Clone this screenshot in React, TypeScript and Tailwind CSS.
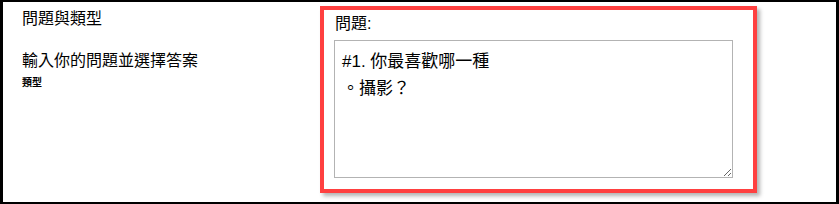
export default function App() {
  const font = { fontFamily: '"Liberation Sans", "Noto Sans CJK TC", sans-serif' }
  return (
    <div className="w-[839px] h-[204px] bg-white border-x-[3px] border-y-2 border-black flex" style={font}>
      <div className="w-[317px] pl-[19px] pt-[6px] text-black">
        <div className="text-[16px] leading-[22px]">問題與類型</div>
        <div className="mt-[20px] text-[16px] leading-[22px]">輸入你的問題並選擇答案</div>
        <div className="text-[10px] font-bold leading-[12px] mt-[5px]">類型</div>
      </div>
      <div className="mt-[4px] w-[437px] h-[187px] border-4 border-[#ff4040] shadow-[3px_3px_4px_rgba(0,0,0,0.3)] pl-[10px] pt-[4px]">
        <div className="text-[16px] leading-[20px] pl-[1px]">問題:</div>
        <textarea
          readOnly
          className="block mt-[6px] w-[399px] h-[138px] border border-[#b3b3b3] px-[7px] pt-[7px] text-[17px] leading-[27px] text-black outline-none resize"
          style={font}
          defaultValue={'#1. 你最喜歡哪一種\n。攝影？'}
        />
      </div>
    </div>
  )
}
